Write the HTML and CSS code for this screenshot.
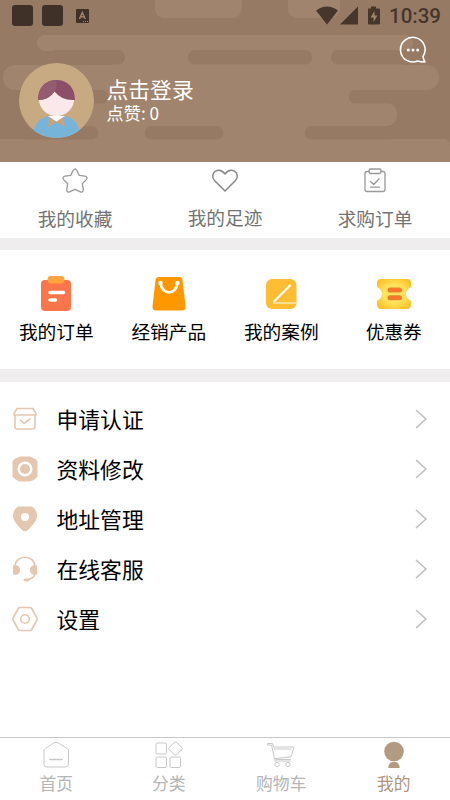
FILE: index.html
```
<!DOCTYPE html>
<html lang="zh-CN">
<head>
<meta charset="utf-8">
<meta name="viewport" content="width=device-width, initial-scale=1">
<title>我的</title>
<link rel="stylesheet" href="styles.css">
</head>
<body>
<div class="screen">
  <header class="header">
    <svg class="pattern" width="450" height="162" viewBox="0 0 450 162">
      <rect width="450" height="162" fill="#967a63"/>
      <g fill="#a1846d">
        <rect x="155" y="-8" width="87" height="26" rx="9"/>
        <rect x="288" y="-8" width="52" height="26" rx="9"/>
        <rect x="37" y="35" width="376" height="16" rx="8"/>
        <rect x="112" y="43" width="290" height="30"/>
        <rect x="3" y="65" width="436" height="25" rx="12"/>
        <rect x="90" y="80" width="266" height="30"/>
        <rect x="60" y="103" width="337" height="23" rx="10"/>
        <rect x="80" y="115" width="240" height="30"/>
        <path d="M0 139H444Q450 139 450 146V162H0Z"/>
      </g>
      <g fill="#967a63">
        <rect x="50" y="50" width="75" height="14.500" rx="7"/>
        <rect x="188" y="50" width="124" height="14.500" rx="7"/>
        <rect x="331" y="50" width="85" height="14.500" rx="7"/>
        <rect x="40" y="90" width="68" height="13.500" rx="6"/>
        <rect x="349" y="90" width="60" height="13.500" rx="6"/>
        <rect x="20" y="126" width="78" height="13.500" rx="6"/>
        <rect x="145" y="126" width="78" height="13.500" rx="6"/>
        <rect x="305" y="126" width="90" height="13.500" rx="6"/>
      </g>
    </svg>
    <div class="status">
      <span class="block"></span><span class="block"></span>
      <svg class="keyboard" width="13" height="14" viewBox="0 0 13 14"><rect width="13" height="14" rx="1" fill="#3f3028"/><path d="M3.500 10L6.300 3.500L9.200 10M4.500 7.800H8.200" fill="none" stroke="#a1846d" stroke-width="1.500"/><path d="M7 12.500H12" stroke="#a1846d" stroke-dasharray="1 1"/></svg>
      <svg class="signals" width="64" height="20" viewBox="0 0 64 20" fill="#46362c"><path d="M0 4.500Q11 -3.500 22 4.500L11 18.500Z"/><path d="M24 18.500L42 .500V18.500Z"/><path d="M52 2.500H55V.500H60V2.500H63Q64 2.500 64 3.500V17.500Q64 18.500 63 18.500H53Q52 18.500 52 17.500V3.500Z"/><path d="M58.500 5L54.500 11.500H57.500V16L61.500 9.500H58.500Z" fill="#a1846d"/></svg>
      <span class="time">10:39</span>
    </div>
    <div class="profile">
      <svg class="avatar" width="75" height="75" viewBox="0 0 75 75">
        <defs><clipPath id="disc"><circle cx="37.500" cy="37.500" r="37.500"/></clipPath></defs>
        <g clip-path="url(#disc)">
          <rect width="75" height="75" fill="#c8aa82"/>
          <path d="M15 66Q19 54 31 53H44Q56 54 60 66V75H15Z" fill="#76b5d9"/>
          <path d="M30 53L29 64L37.500 59L46 64L44 53Z" fill="#c8a27c"/>
          <path d="M29 53L37.500 58.500L46 53Z" fill="#fff"/>
          <circle cx="37.500" cy="35.500" r="17.700" fill="#fbe8ea"/>
          <path d="M19 37C19 25 26 17 37.500 17S56 25 56 37Q43 38 35.500 28.500Q30 37 19 37Z" fill="#8b5067"/>
          <path d="M19 37C19 25 26 17 37.500 17Q38 25 35.500 28.500Q30 37 19 37Z" fill="#935c70"/>
        </g>
      </svg>
      <div class="who"><div class="name">点击登录</div><div class="likes">点赞: 0</div></div>
      <svg class="chat" width="28" height="28" viewBox="0 0 28 28" fill="none" stroke="#fff" stroke-width="1.600"><path d="M24 20.500A12.300 12.300 0 1 0 18.500 25Q21 26 26 26Q24.500 24 24 20.500Z" stroke-linejoin="round"/><g fill="#fff" stroke="none"><circle cx="9.300" cy="14" r="1.500"/><circle cx="14" cy="14" r="1.500"/><circle cx="18.700" cy="14" r="1.500"/></g></svg>
    </div>
  </header>

  <nav class="shortcuts">
    <a class="shortcut"><svg width="28" height="28" viewBox="0 0 28 28"><path d="M12.300 3.300Q14 .600 15.700 3.300L18.300 8.400L24 9.200Q27.300 10 25.300 12.600L21.300 16.700L22.300 22.500Q22.100 26 19.500 24.800L14 22.300L8.500 24.800Q5.900 26 5.700 22.500L6.700 16.700L2.700 12.600Q.700 10 4 9.200L9.700 8.400Z"/></svg><span>我的收藏</span></a>
    <a class="shortcut raised"><svg width="28" height="28" viewBox="0 0 28 28"><path class="heart" d="M14 24L3.500 13.500C.500 10.200 1.500 6 4.500 4.200C8 2.200 11.500 3.500 14 7C16.500 3.500 20 2.200 23.500 4.200C26.500 6 27.500 10.200 24.500 13.500Z"/></svg><span>我的足迹</span></a>
    <a class="shortcut"><svg width="28" height="28" viewBox="0 0 28 28"><path d="M8 4.500H6Q4 4.500 4 6.500V22.500Q4 24.500 6 24.500H22Q24 24.500 24 22.500V6.500Q24 4.500 22 4.500H20"/><rect x="8" y="2" width="12" height="4.500" rx="1.500"/><path d="M9.500 14.500L12.700 17.500L18 12M9.500 20.200H18.500"/></svg><span>求购订单</span></a>
  </nav>

  <nav class="services">
    <a class="service"><svg width="36" height="36" viewBox="0 0 36 36"><rect x="3" y="4" width="30" height="31" rx="4" fill="#fa7549"/><rect x="9.500" y="0" width="17" height="7.500" rx="3.500" fill="#ffa33f"/><path d="M12 16.500H25.500M12 24H17.500" stroke="#fff" stroke-width="3.500" stroke-linecap="round"/></svg><span>我的订单</span></a>
    <a class="service"><svg width="36" height="36" viewBox="0 0 36 36"><path d="M8 1H28Q31 1 31.500 4L34.500 30Q35 34.500 31 34.500H5Q1 34.500 1.500 30L4.500 4Q5 1 8 1Z" fill="#ff9800"/><path d="M9.500 7C11 19.500 25 19.500 26.500 7" fill="none" stroke="#fff" stroke-width="2.600"/><circle cx="9.500" cy="7" r="2.200" fill="#fff"/><circle cx="26.500" cy="7" r="2.200" fill="#fff"/></svg><span>经销产品</span></a>
    <a class="service"><svg width="36" height="36" viewBox="0 0 36 36"><rect x="3" y="3" width="30.500" height="30" rx="6" fill="#febd32"/><path d="M11 25.500L27 9.500" stroke="#fff" stroke-width="2.200" stroke-linecap="round"/><path d="M10 27H33" stroke="#fff4d5" stroke-width="1.200"/></svg><span>我的案例</span></a>
    <a class="service"><svg width="36" height="36" viewBox="0 0 36 36"><defs><radialGradient id="gold" r=".62"><stop offset=".5" stop-color="#ffe25c"/><stop offset="1" stop-color="#fcbf24"/></radialGradient></defs><path d="M5 3H31Q35 3 35 7V11Q30 14 30 18T35 25V28Q35 33 31 33H5Q1 33 1 28V25Q6 22 6 18T1 11V7Q1 3 5 3Z" fill="url(#gold)"/><path d="M14 14H23.500M14 21.800H23.500" stroke="#d9892d" stroke-width="5" stroke-linecap="round"/><path d="M14 14H23.500M14 21.800H23.500" stroke="#ff7429" stroke-width="3.300" stroke-linecap="round"/></svg><span>优惠券</span></a>
  </nav>

  <main class="menu">
    <a class="row"><svg class="icon" width="26" height="26" viewBox="0 0 26 26"><path class="line" d="M5 2.500H21L24 7.500V9H2V7.500ZM3 9V21Q3 23 5 23H21Q23 23 23 21V9"/><path class="line" d="M8.500 14L12 17.500L18 13"/></svg><span>申请认证</span><svg class="arrow" width="13" height="20" viewBox="0 0 13 20"><path d="M1 1L11 10L1 19"/></svg></a>
    <a class="row"><svg class="icon" width="26" height="26" viewBox="0 0 26 26"><path class="solid" d="M8 .500H18Q23 2 25.500 5.500V20.500Q23 24 18 25.500H8Q3 24 .500 20.500V5.500Q3 2 8 .500Z"/><circle cx="13" cy="13" r="6.300" fill="none" stroke="#fff" stroke-width="2.500"/></svg><span>资料修改</span><svg class="arrow" width="13" height="20" viewBox="0 0 13 20"><path d="M1 1L11 10L1 19"/></svg></a>
    <a class="row"><svg class="icon" width="26" height="26" viewBox="0 0 26 26"><path class="solid" d="M6 .500H20Q25 4 25 10Q25 14 21.500 18L16 24Q13 26.500 10 24L4.500 18Q1 14 1 10Q1 4 6 .500Z"/><circle cx="13" cy="11" r="4" fill="#fff"/></svg><span>地址管理</span><svg class="arrow" width="13" height="20" viewBox="0 0 13 20"><path d="M1 1L11 10L1 19"/></svg></a>
    <a class="row"><svg class="icon" width="26" height="26" viewBox="0 0 26 26"><path class="line" d="M3 11C3 -2 23 -2 23 11M23.500 17Q22 23 15 23.500"/><path class="solid" d="M1 9.500Q8 8 8 14T1 18.500ZM25 9.500Q18 8 18 14T25 18.500Z"/><ellipse class="solid" cx="14.500" cy="24" rx="3" ry="1.600"/></svg><span>在线客服</span><svg class="arrow" width="13" height="20" viewBox="0 0 13 20"><path d="M1 1L11 10L1 19"/></svg></a>
    <a class="row"><svg class="icon" width="26" height="26" viewBox="0 0 26 26"><path class="line" d="M8 1.500H18Q19 1.500 19.700 2.500L25 12Q25.300 13 25 14L19.700 23.500Q19 24.500 18 24.500H8Q7 24.500 6.300 23.500L1 14Q.700 13 1 12L6.300 2.500Q7 1.500 8 1.500Z"/><circle class="line" cx="13" cy="13" r="4.300"/></svg><span>设置</span><svg class="arrow" width="13" height="20" viewBox="0 0 13 20"><path d="M1 1L11 10L1 19"/></svg></a>
  </main>

  <footer class="tabs">
    <a class="tab"><svg width="28" height="28" viewBox="0 0 28 28"><path d="M12 1.700Q14 .500 16 1.700L25 7.500Q26.500 8.500 26.500 10V23Q26.500 26 23.500 26H4.500Q2 26 2 23V10Q2 8.500 3.500 7.500Z"/><path d="M7.500 18.500H20.500" stroke-width="1.500" stroke-dasharray="3 .4"/></svg><span>首页</span></a>
    <a class="tab"><svg width="28" height="28" viewBox="0 0 28 28"><rect x="1" y="2" width="10.500" height="11" rx="1.500"/><rect x="1" y="16" width="10.500" height="10.500" rx="1.500"/><rect x="15" y="16" width="10.500" height="10.500" rx="1.500"/><path d="M19.300 1.500Q20.500 .500 21.700 1.500L27 6.500Q28 7.500 27 8.500L21.700 13.500Q20.500 14.500 19.300 13.500L14 8.500Q13 7.500 14 6.500Z"/></svg><span>分类</span></a>
    <a class="tab"><svg width="28" height="28" viewBox="0 0 28 28"><path d="M.500 2.500V4H4.500L8 20H23.500M.500 2.500H5.500L6.500 6H27L24 16L8 17.500M7 8H24.500M9.500 17.300L9 18.500H24"/><circle cx="10" cy="23.500" r="2.200"/><circle cx="21" cy="23.500" r="2.200"/></svg><span>购物车</span></a>
    <a class="tab active"><svg width="28" height="28" viewBox="0 0 28 28"><circle cx="14" cy="10.500" r="9.800"/><path d="M8.300 27Q8.500 20.800 14 20.800T19.700 27Z"/></svg><span>我的</span></a>
  </footer>
</div>
</body>
</html>
```
FILE: styles.css
```
* { box-sizing: border-box; }
body {
  margin: 0;
  background: #fff;
  color: #000;
  font-family: "Noto Sans CJK SC", sans-serif;
}
svg { display: block; flex: none; }
.screen {
  width: 450px;
  height: 800px;
  display: flex;
  flex-direction: column;
  overflow: hidden;
}
.header { position: relative; height: 162px; flex: none; }
.pattern { position: absolute; top: 0; left: 0; }
.status {
  position: relative;
  height: 31px;
  display: flex;
  align-items: center;
  padding: 0 10px 0 12px;
}
.block { width: 21px; height: 21px; margin-right: 9px; border-radius: 3px; background: #3f3028; }
.keyboard { margin-left: 4px; }
.signals { margin-left: auto; }
.time {
  margin-left: 9px;
  width: 51px;
  font: 500 20.500px/30px Roboto, sans-serif;
  color: #46362c;
  white-space: nowrap;
}
.profile { position: relative; display: flex; padding: 5px 23px 0 19px; }
.avatar { margin-top: 27px; }
.who { margin: 41px 0 0 12.500px; color: #fff; }
.name { font-size: 21.800px; line-height: 24px; }
.likes { font-size: 17.200px; line-height: 24px; }
.chat { margin-left: auto; }

.shortcuts { display: flex; height: 76px; flex: none; }
.shortcut {
  flex: 1;
  display: flex;
  flex-direction: column;
  align-items: center;
  padding-top: 5px;
  font-size: 18.700px;
  line-height: 26px;
  color: #737373;
}
.shortcut span { margin-top: 10px; }
.raised span { margin-top: 9px; }
.shortcut svg { fill: none; stroke: #999; stroke-width: 1.300; stroke-linecap: round; stroke-linejoin: round; }
.shortcut .heart { stroke: #888; stroke-width: 1.500; }

.services {
  display: flex;
  height: 144px;
  flex: none;
  border-top: 12px solid #efedee;
  border-bottom: 13px solid #efedee;
}
.service {
  flex: 1;
  display: flex;
  flex-direction: column;
  align-items: center;
  padding-top: 26px;
  font-size: 18.700px;
  line-height: 26px;
}
.service span { margin-top: 6px; }

.menu { flex: 1; padding: 12px 22px 0 12px; }
.row { display: flex; align-items: center; height: 50px; font-size: 21.800px; line-height: 30px; }
.row span { margin-left: 18.500px; }
.icon .solid { fill: #e5c7b0; }
.icon .line { fill: none; stroke: #e5c7b0; stroke-width: 1.600; stroke-linejoin: round; stroke-linecap: round; }
.arrow { margin-left: auto; fill: none; stroke: #bbb; stroke-width: 1.400; }

.tabs { display: flex; height: 63px; flex: none; border-top: 1px solid #c8c8c8; }
.tab {
  flex: 1;
  display: flex;
  flex-direction: column;
  align-items: center;
  padding-top: 3px;
  font-size: 16.800px;
  line-height: 24px;
  color: #b5b5b5;
}
.tab span { margin-top: 2px; }
.tab svg { fill: none; stroke: #c2c2c2; stroke-width: .900; }
.tab.active { color: #ae967b; }
.tab.active svg { fill: #b29c81; stroke: none; }
```
